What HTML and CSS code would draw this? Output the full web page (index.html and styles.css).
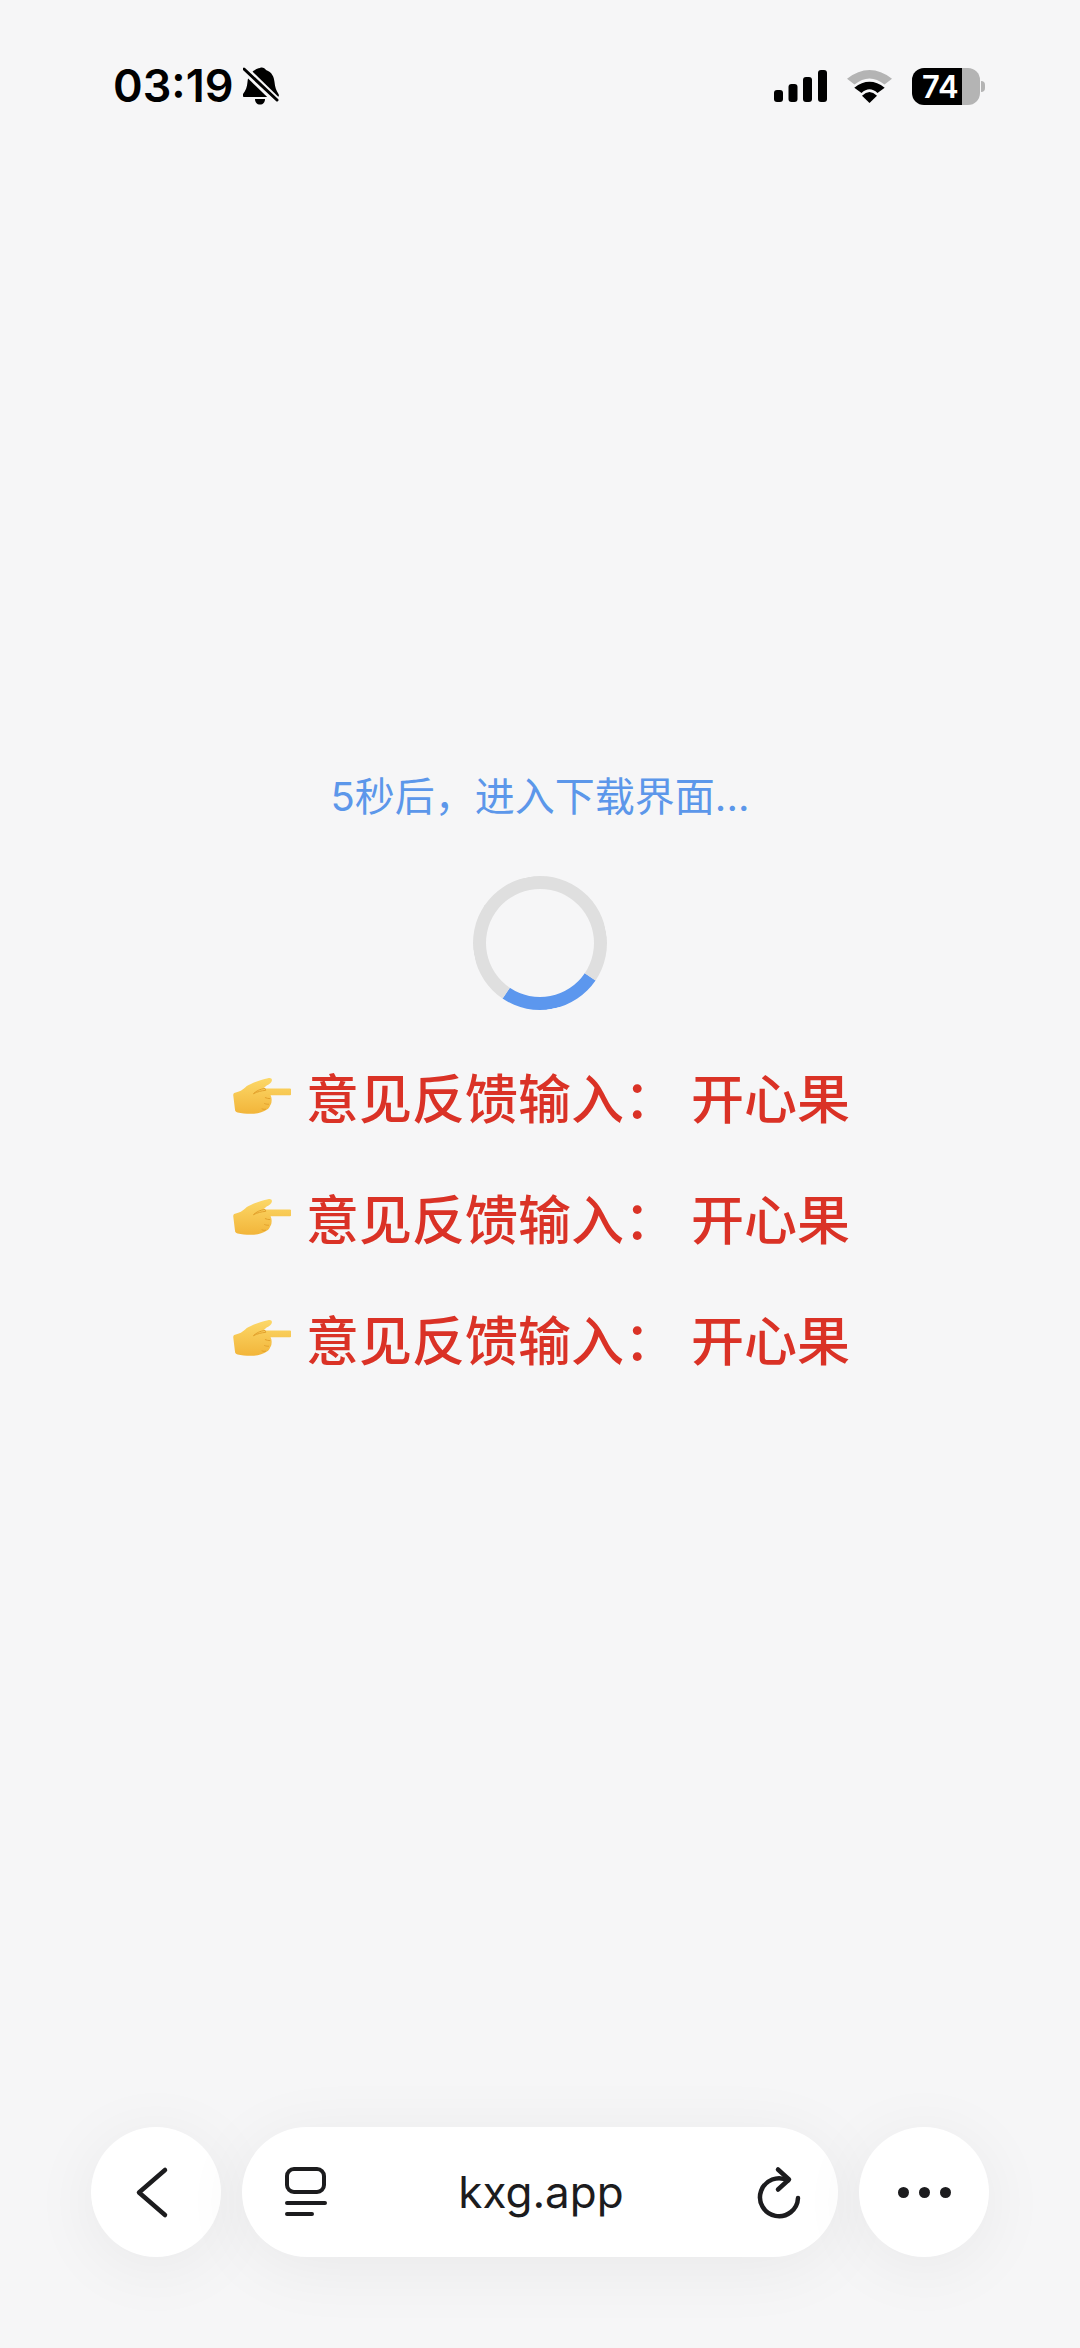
FILE: index.html
```html
<!DOCTYPE html>
<html lang="zh-CN">
<head>
    <meta charset="UTF-8">
    <meta name="viewport" content="width=device-width, initial-scale=1.0">
    <title>kxg.app</title>
    <link rel="stylesheet" href="styles.css">
</head>
<body>

<svg class="defs" width="0" height="0" aria-hidden="true">
    <defs>
        <linearGradient id="hand_fill" x1="0" y1="0" x2="0" y2="1">
            <stop offset="0" stop-color="#fcd868"/>
            <stop offset="1" stop-color="#f2b53a"/>
        </linearGradient>
        <symbol id="hand" viewBox="20 38 176 120">
            <path d="M26 88c14-3 22-6 36-20 14-10 44-20 64-24 8-2 13 1 12 7-1 7-7 11-16 15l-10 9h78c7 0 10 4 10 10s-4 11-10 11h-56c3 6 4 12 3 17 0 5-1 9-4 13-2 6-5 10-10 13-12 8-30 14-50 13-14 0-28-1-39-4-6-2-8-4-8-9l-5-41c-1-6 1-9 5-10z" fill="url(#hand_fill)"/>
            <path d="M116 75c-14 2-26 8-34 16 12-6 24-9 36-10zM118 103c5 2 9 3 14 3M116 121c5 2 8 2 12 2M108 137c5 2 8 2 11 1" fill="none" stroke="#e2a02c" stroke-width="3" stroke-linecap="round"/>
        </symbol>
    </defs>
</svg>

<div class="page">
    <!-- 状态栏 -->
    <div class="status_bar">
        <div class="status_left">
            <span class="time">03:19</span>
            <svg class="bell" viewBox="0 0 36 38">
                <path d="M17 1c2-1 5 0 6 2 6 2 8 7 8.500 12 .5 5 1.500 8 4 12 1 2 0 3-2 3H2c-2 0-3-1-2-3 3-4 4-7 4.500-12C5 9 8 5 12 3c1-1 3-2 5-2z" fill="#000"/>
                <path d="M12 32h10c0 3.500-2 5.500-5 5.500s-5-2-5-5.500z" fill="#000"/>
                <path d="M0 1l35 34" stroke="#f6f6f7" stroke-width="8"/>
                <path d="M1 2l33 31" stroke="#000" stroke-width="3" stroke-linecap="round"/>
            </svg>
        </div>
        <div class="status_right">
            <svg class="signal" viewBox="0 0 53 32">
                <rect x="0" y="20" width="9" height="12" rx="3"/>
                <rect x="14.500" y="14" width="9" height="18" rx="3"/>
                <rect x="29" y="7" width="9" height="25" rx="3"/>
                <rect x="44" y="0" width="9" height="32" rx="3"/>
            </svg>
            <svg class="wifi" viewBox="0 0 45 33">
                <path d="M0 8.700Q22.500-8.700 45 8.700L37.500 14.500Q22.500 2.500 7.500 14.500Z" fill="#b4b4b4"/>
                <path d="M7.300 17.700Q22.500 6 37.700 17.700L30.500 23Q22.500 15.500 14.500 23Z" fill="#000"/>
                <path d="M22.500 33L15 25.700Q22.500 18.500 30 25.700Z" fill="#000"/>
            </svg>
            <div class="battery">
                <div class="battery_body">74</div>
                <div class="battery_nub"></div>
            </div>
        </div>
    </div>

    <!-- 中间内容 -->
    <div class="content">
        <p class="tip">5秒后，进入下载界面...</p>
        <div class="spinner"></div>
        <div class="feedback_list">
            <div class="feedback">
                <svg class="hand"><use href="#hand"/></svg>
                <span>意见反馈输入： 开心果</span>
            </div>
            <div class="feedback">
                <svg class="hand"><use href="#hand"/></svg>
                <span>意见反馈输入： 开心果</span>
            </div>
            <div class="feedback">
                <svg class="hand"><use href="#hand"/></svg>
                <span>意见反馈输入： 开心果</span>
            </div>
        </div>
    </div>

    <!-- 底部工具栏 -->
    <div class="toolbar">
        <div class="round_btn">
            <svg class="tool_icon" viewBox="0 0 130 130">
                <path d="M74 43L48 65.500L74 88" fill="none" stroke="#1c1c1e" stroke-width="4.500" stroke-linecap="round" stroke-linejoin="round"/>
            </svg>
        </div>
        <div class="url_bar">
            <svg class="tabs_icon" viewBox="0 0 44 50">
                <rect x="4" y="2" width="37" height="23" rx="7" fill="none" stroke="#1c1c1e" stroke-width="4"/>
                <path d="M4 36h38M4 47h25" stroke="#1c1c1e" stroke-width="4" stroke-linecap="round"/>
            </svg>
            <span class="url">kxg.app</span>
            <svg class="reload_icon" viewBox="0 0 48 54">
                <path d="M43 33A19 19 0 1 1 33 15.500" fill="none" stroke="#1c1c1e" stroke-width="4.500" stroke-linecap="round"/>
                <path d="M23 4.500L34 14.500L23 24.500" fill="none" stroke="#1c1c1e" stroke-width="4.500" stroke-linecap="round" stroke-linejoin="round"/>
            </svg>
        </div>
        <div class="round_btn">
            <div class="dots">
                <span></span><span></span><span></span>
            </div>
        </div>
    </div>
</div>

</body>
</html>
```

FILE: styles.css
```css
/* 全局样式 */
body {
    margin: 0;
    background-color: #f6f6f7;
    font-family: Inter, "Noto Sans CJK SC", sans-serif;
}

.defs {
    display: block;
    height: 0;
}

.page {
    width: 1080px;
    height: 2348px;
    display: flex;
    flex-direction: column;
    overflow: hidden;
}

/* 状态栏 */
.status_bar {
    height: 174px;
    padding: 67px 95px 0 113px;
    box-sizing: border-box;
    display: flex;
    justify-content: space-between;
    align-items: flex-start;
    flex-shrink: 0;
}

.status_left {
    display: flex;
    align-items: center;
    gap: 10px;
    height: 38px;
}

.time {
    font-size: 45px;
    font-weight: 600;
    line-height: 38px;
    color: #000;
}

.bell {
    width: 36px;
    height: 38px;
}

.status_right {
    display: flex;
    align-items: center;
    gap: 20px;
    height: 38px;
}

.signal {
    width: 53px;
    height: 32px;
}

.wifi {
    width: 45px;
    height: 33px;
}

.battery {
    display: flex;
    align-items: center;
    gap: 1px;
}

.battery_body {
    width: 68px;
    height: 37px;
    border-radius: 12px;
    background: linear-gradient(90deg, #000 50px, #b4b4b4 50px);
    color: #fff;
    font-size: 31px;
    font-weight: 600;
    line-height: 37px;
    padding-left: 10px;
    box-sizing: border-box;
}

.battery_nub {
    width: 4px;
    height: 11px;
    border-radius: 0 4px 4px 0;
    background-color: #b4b4b4;
}

/* 中间内容 */
.content {
    flex: 1;
    padding-top: 596px;
    display: flex;
    flex-direction: column;
    align-items: center;
}

.tip {
    margin: 0;
    font-size: 40px;
    line-height: 54px;
    color: #5c97ea;
}

.spinner {
    width: 134px;
    height: 134px;
    margin-top: 52px;
    box-sizing: border-box;
    border: 13px solid #dfdfdf;
    border-top-color: #5c97ee;
    border-radius: 50%;
    transform: rotate(169deg);
}

.feedback_list {
    margin-top: 46px;
    margin-left: 3px;
    display: flex;
    flex-direction: column;
    gap: 41px;
}

.feedback {
    height: 80px;
    display: flex;
    align-items: center;
    justify-content: center;
    gap: 15px;
    font-size: 53px;
    font-weight: 500;
    color: #da3226;
    white-space: nowrap;
}

.hand {
    width: 58px;
    height: 40px;
    flex-shrink: 0;
}

/* 底部工具栏 */
.toolbar {
    height: 221px;
    padding: 0 91px;
    box-sizing: border-box;
    display: flex;
    gap: 21px;
    flex-shrink: 0;
}

.round_btn {
    width: 130px;
    height: 130px;
    border-radius: 50%;
    background-color: #fff;
    box-shadow: 0 10px 70px rgba(0, 0, 0, 0.06);
    display: flex;
    align-items: center;
    justify-content: center;
    flex-shrink: 0;
}

.tool_icon {
    width: 130px;
    height: 130px;
}

.url_bar {
    flex: 1;
    height: 130px;
    border-radius: 65px;
    background-color: #fff;
    box-shadow: 0 10px 70px rgba(0, 0, 0, 0.06);
    padding: 0 35px 0 41px;
    display: flex;
    align-items: center;
    justify-content: space-between;
}

.tabs_icon {
    width: 44px;
    height: 50px;
}

.url {
    font-size: 44px;
    color: #1c1c1e;
}

.reload_icon {
    width: 48px;
    height: 54px;
}

.dots {
    display: flex;
    gap: 10px;
}

.dots span {
    width: 11px;
    height: 11px;
    border-radius: 50%;
    background-color: #1c1c1e;
}
```
